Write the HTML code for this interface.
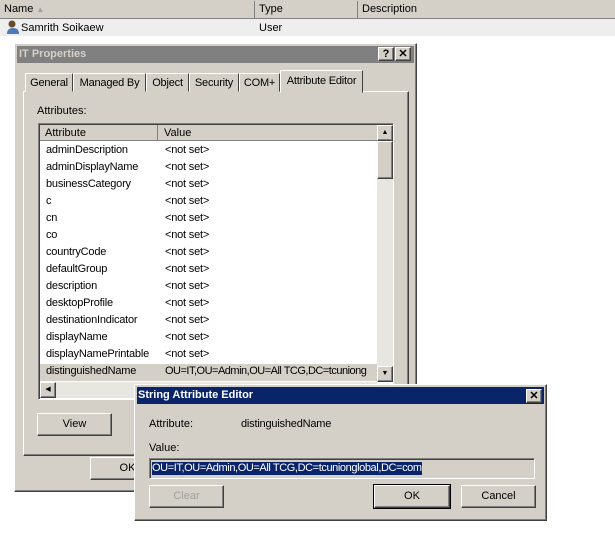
<!DOCTYPE html>
<html><head><meta charset="utf-8"><style>
*{margin:0;padding:0;box-sizing:border-box}
body{width:615px;height:546px;background:#fff;position:relative;overflow:hidden;font-family:"Liberation Sans",sans-serif;font-size:11px;color:#000}
.a{position:absolute;white-space:nowrap}
.raised{background:#d4d0c8;border:1px solid;border-color:#fff #404040 #404040 #fff;box-shadow:inset -1px -1px 0 #808080}
.sunk{border:1px solid;border-color:#808080 #fff #fff #808080;box-shadow:inset 1px 1px 0 #404040}
.btn{position:absolute;background:#d4d0c8;border:1px solid;border-color:#fff #404040 #404040 #fff;box-shadow:inset -1px -1px 0 #808080;text-align:center;font-size:11px;white-space:nowrap}
.tab{position:absolute;top:73px;height:19px;border:1px solid;border-color:#fff #404040 transparent #fff;padding-top:3px;text-align:center;font-size:11px;letter-spacing:-0.2px;background:#d4d0c8;white-space:nowrap;overflow:hidden}
.row{position:absolute;left:7px;height:17px;font-size:11px;line-height:17px;white-space:nowrap;letter-spacing:-0.2px}
</style></head><body>
<div class="a" style="left:0;top:0;width:615px;height:19px;background:#d4d0c8;border-bottom:1px solid #808080"></div>
<div class="a" style="left:4px;top:3px;font-size:11px">Name <span style="color:#a0a0a0;font-size:8px">▲</span></div>
<div class="a" style="left:254px;top:1px;width:1px;height:17px;background:#808080"></div>
<div class="a" style="left:259px;top:3px;font-size:11px">Type</div>
<div class="a" style="left:357px;top:1px;width:1px;height:17px;background:#808080"></div>
<div class="a" style="left:362px;top:3px;font-size:11px">Description</div>
<div class="a" style="left:0;top:19px;width:615px;height:17px;background:#eee"></div>
<svg class="a" style="left:6px;top:19px" width="14" height="16"><circle cx="6" cy="5" r="3.5" fill="#6b4a2b"/><path d="M1 15 Q1 9 7 9 Q13 9 13 15Z" fill="#4a7ab8"/></svg>
<div class="a" style="left:21px;top:22px;font-size:11px">Samrith Soikaew</div>
<div class="a" style="left:259px;top:22px;font-size:11px">User</div>

<div class="a raised" style="left:14px;top:43px;width:403px;height:449px"></div>
<div class="a" style="left:17px;top:46px;width:397px;height:17px;background:#808080"></div>
<div class="a" style="left:19px;top:48px;color:#d4d0c8;font-weight:bold;font-size:11px">IT Properties</div>
<div class="btn" style="left:378px;top:47px;width:16px;height:14px;font-weight:bold;font-size:11px;line-height:12px">?</div>
<div class="btn" style="left:395px;top:47px;width:16px;height:14px;font-weight:bold;font-size:11px;line-height:12px">✕</div>
<div class="a" style="left:23px;top:91px;width:386px;height:365px;border:1px solid;border-color:#fff #404040 #404040 #fff;box-shadow:inset -1px -1px 0 #808080"></div>
<div class="tab" style="left:25px;width:48px">General</div>
<div class="tab" style="left:73px;width:73px">Managed By</div>
<div class="tab" style="left:146px;width:43px">Object</div>
<div class="tab" style="left:189px;width:50px">Security</div>
<div class="tab" style="left:239px;width:41px">COM+</div>
<div class="tab" style="left:280px;width:83px;top:70px;height:23px;padding-top:4px;z-index:2">Attribute Editor</div>
<div class="a" style="left:37px;top:105px;font-size:11px">Attributes:</div>
<div class="a sunk" style="left:38px;top:123px;width:356px;height:277px;background:#fff;overflow:hidden">
 <div class="a" style="left:1px;top:1px;width:337px;height:16px;background:#d4d0c8;border-bottom:1px solid #808080"></div>
 <div class="a" style="left:118px;top:1px;width:1px;height:15px;background:#808080"></div>
 <div class="a" style="left:6px;top:3px;font-size:11px">Attribute</div>
 <div class="a" style="left:125px;top:3px;font-size:11px">Value</div>
 <div class="a" style="left:1px;top:240px;width:337px;height:17px;background:#d4d0c8"></div>
 <div style="position:absolute;left:0;top:18px">
 <div class="row" style="top:0">adminDescription</div><div class="row" style="top:17px">adminDisplayName</div><div class="row" style="top:34px">businessCategory</div><div class="row" style="top:51px">c</div><div class="row" style="top:68px">cn</div><div class="row" style="top:85px">co</div><div class="row" style="top:102px">countryCode</div><div class="row" style="top:119px">defaultGroup</div><div class="row" style="top:136px">description</div><div class="row" style="top:153px">desktopProfile</div><div class="row" style="top:170px">destinationIndicator</div><div class="row" style="top:187px">displayName</div><div class="row" style="top:204px">displayNamePrintable</div><div class="row" style="top:221px">distinguishedName</div>
 <div class="row" style="left:126px;top:0">&lt;not set&gt;</div><div class="row" style="left:126px;top:17px">&lt;not set&gt;</div><div class="row" style="left:126px;top:34px">&lt;not set&gt;</div><div class="row" style="left:126px;top:51px">&lt;not set&gt;</div><div class="row" style="left:126px;top:68px">&lt;not set&gt;</div><div class="row" style="left:126px;top:85px">&lt;not set&gt;</div><div class="row" style="left:126px;top:102px">&lt;not set&gt;</div><div class="row" style="left:126px;top:119px">&lt;not set&gt;</div><div class="row" style="left:126px;top:136px">&lt;not set&gt;</div><div class="row" style="left:126px;top:153px">&lt;not set&gt;</div><div class="row" style="left:126px;top:170px">&lt;not set&gt;</div><div class="row" style="left:126px;top:187px">&lt;not set&gt;</div><div class="row" style="left:126px;top:204px">&lt;not set&gt;</div><div class="row" style="left:126px;top:221px;letter-spacing:-0.5px">OU=IT,OU=Admin,OU=All TCG,DC=tcuniong</div>
 </div>
 <div class="a" style="left:338px;top:1px;width:16px;height:257px;background:#e8e6e0"></div>
 <div class="btn" style="left:338px;top:1px;width:16px;height:16px;font-size:7px;line-height:14px">▲</div>
 <div class="btn" style="left:338px;top:17px;width:16px;height:38px"></div>
 <div class="btn" style="left:338px;top:242px;width:16px;height:16px;font-size:7px;line-height:14px">▼</div>
 <div class="a" style="left:1px;top:258px;width:337px;height:16px;background:#e8e6e0"></div>
 <div class="btn" style="left:1px;top:258px;width:16px;height:16px;font-size:7px;line-height:14px">◀</div>
</div>
<div class="btn" style="left:37px;top:413px;width:75px;height:23px;line-height:20px">View</div>
<div class="btn" style="left:90px;top:457px;width:75px;height:23px;line-height:20px">OK</div>

<div class="a raised" style="left:134px;top:384px;width:413px;height:137px;z-index:5">
 <div class="a" style="left:2px;top:2px;width:407px;height:17px;background:#0a246a"></div>
 <div class="a" style="left:3px;top:4px;color:#fff;font-weight:bold;font-size:11px">String Attribute Editor</div>
 <div class="btn" style="left:391px;top:4px;width:16px;height:14px;font-weight:bold;font-size:11px;line-height:12px">✕</div>
 <div class="a" style="left:14px;top:33px;font-size:11px">Attribute:</div>
 <div class="a" style="left:106px;top:33px;font-size:11px;letter-spacing:-0.2px">distinguishedName</div>
 <div class="a" style="left:14px;top:57px;font-size:11px">Value:</div>
 <div class="a sunk" style="left:14px;top:73px;width:386px;height:21px;background:#d4d0c8">
  <span class="a" style="left:2px;top:3px;background:#0a246a;color:#fff;font-size:11px;line-height:13px;letter-spacing:-0.4px">OU=IT,OU=Admin,OU=All TCG,DC=tcunionglobal,DC=com</span>
 </div>
 <div class="btn" style="left:14px;top:100px;width:75px;height:23px;line-height:20px;color:#a0a0a0">Clear</div>
 <div class="btn" style="left:239px;top:100px;width:76px;height:23px;line-height:20px;outline:1px solid #000">OK</div>
 <div class="btn" style="left:326px;top:100px;width:75px;height:23px;line-height:20px">Cancel</div>
</div>
</body></html>
